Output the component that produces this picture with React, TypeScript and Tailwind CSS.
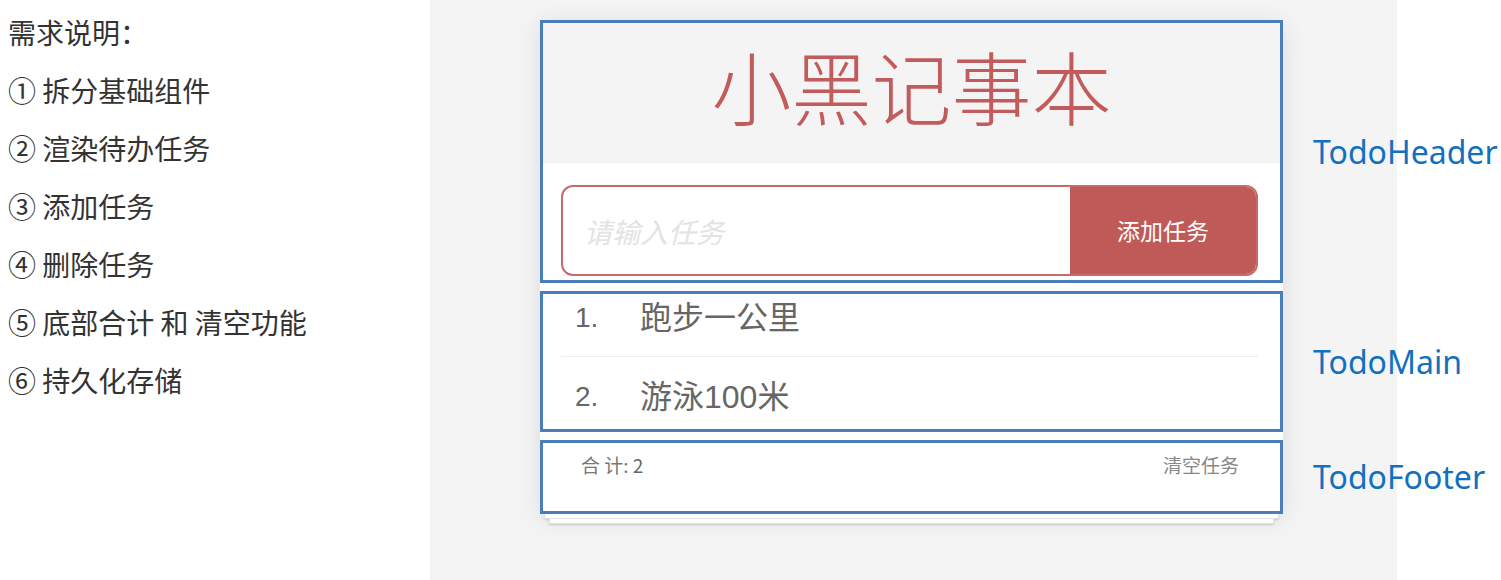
const cjk = "font-['Noto_Sans_CJK_SC',sans-serif]";

const steps = [
  "① 拆分基础组件",
  "② 渲染待办任务",
  "③ 添加任务",
  "④ 删除任务",
  "⑤ 底部合计 和 清空功能",
  "⑥ 持久化存储",
];

const todos = [
  { id: 1, name: "跑步一公里" },
  { id: 2, name: "游泳100米" },
];

function TodoHeader() {
  return (
    <section className="h-[263px] border-[3px] border-[#4a7ebb]">
      <div className="flex h-[140px] items-center justify-center bg-[#f4f4f4] pb-[18px]">
        <h1 className={`${cjk} text-[80px] font-light leading-none text-[#c25b5b]`}>小黑记事本</h1>
      </div>
      <div className="pl-[18px] pr-[22px] pt-[22px]">
        <div className="flex h-[91px] overflow-hidden rounded-[12px] border-2 border-[#c66a6a] bg-white">
          <input
            className={`${cjk} min-w-0 flex-1 px-[21px] text-[28px] italic text-[#555] outline-none placeholder:text-[#e3e3e3]`}
            placeholder="请输入任务"
          />
          <button className={`${cjk} w-[186px] bg-[#bf5a59] text-[23px] text-white`}>添加任务</button>
        </div>
      </div>
    </section>
  );
}

function TodoMain() {
  return (
    <section className="mt-[8px] h-[141px] border-[3px] border-[#4a7ebb]">
      <ul className="ml-[18px] mr-[22px] font-['Liberation_Sans','Noto_Sans_CJK_SC',sans-serif] text-[32px] text-[#666]">
        {todos.map((t, i) => (
          <li
            key={t.id}
            className={i === 0 ? "flex h-[63px] border-b border-[#ececec] pb-[15px]" : "flex h-[71px] pt-[16px]"}
          >
            <span className="flex h-[48px] w-[79px] items-center pl-[14px] text-[28px]">{i + 1}.</span>
            <span className="flex h-[48px] items-center">{t.name}</span>
          </li>
        ))}
      </ul>
    </section>
  );
}

function TodoFooter() {
  return (
    <section className={`${cjk} mt-[8px] flex h-[74px] justify-between border-[3px] border-[#4a7ebb] pl-[38px] pr-[41px] pt-[10px] text-[19px] leading-[24px] text-[#777]`}>
      <span>
        合 计: <strong className="font-normal text-[#666]">2</strong>
      </span>
      <button className="h-[24px] text-[#888]">清空任务</button>
    </section>
  );
}

export default function App() {
  return (
    <div className="flex h-[580px] w-[1501px] overflow-hidden bg-white">
      <div className={`${cjk} w-[430px] shrink-0 pl-[8px] pt-[3px] text-[28px] leading-[58px] text-[#333]`}>
        <p>需求说明：</p>
        {steps.map((s) => (
          <p key={s}>{s}</p>
        ))}
      </div>

      <div className="flex w-[967px] shrink-0 bg-[#f4f4f4] pl-[110px] pt-[20px]">
        <div className="w-[743px] shrink-0">
          <div className="bg-white shadow-[0_4px_24px_rgba(0,0,0,0.1)]">
            <TodoHeader />
            <TodoMain />
            <TodoFooter />
          </div>
          <div className="mx-[4px] h-[5px] border-x border-b border-[#e2e2e2] bg-white shadow-[0_1px_2px_rgba(0,0,0,0.15)]" />
          <div className="mx-[9px] h-[5px] border-x border-b border-[#e2e2e2] bg-white shadow-[0_1px_2px_rgba(0,0,0,0.15)]" />
        </div>

        <div className="ml-[30px] shrink-0 whitespace-nowrap font-['Noto_Sans',sans-serif] text-[32px] text-[#1170c0]">
          <div className="flex h-[263px] items-center">TodoHeader</div>
          <div className="mt-[8px] flex h-[141px] items-center">TodoMain</div>
          <div className="mt-[8px] flex h-[74px] items-center">TodoFooter</div>
        </div>
      </div>
    </div>
  );
}
